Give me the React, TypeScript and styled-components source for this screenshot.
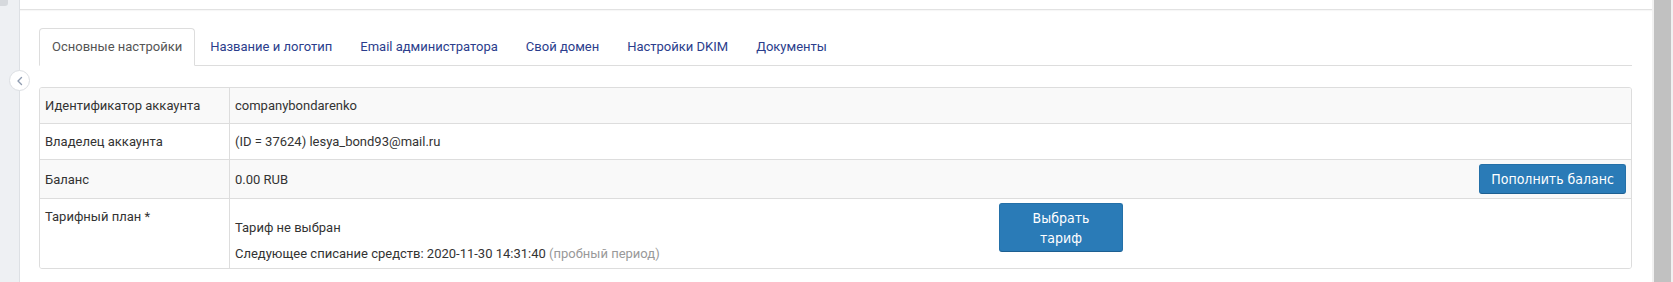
import React from "react";
import styled, { createGlobalStyle } from "styled-components";

const Global = createGlobalStyle`
  html, body { margin: 0; padding: 0; background: #fff; }
  body { font-family: Roboto, "Noto Sans", sans-serif; font-size: 13px; color: #333; }
  * { box-sizing: border-box; }
`;

const Page = styled.div`
  display: flex;
  width: 1673px;
  height: 282px;
  overflow: hidden;
  position: relative;
`;

const SideStrip = styled.div`
  width: 20px;
  flex: none;
  background: #eef0f3;
  border-right: 1px solid #dde0e4;
  position: relative;
`;

const SideTop = styled.div`
  width: 8px;
  height: 6px;
  background: #d6d9dd;
  border-bottom-right-radius: 3px;
`;

const CollapseBtn = styled.div`
  position: absolute;
  left: 9px;
  top: 70px;
  width: 21px;
  height: 21px;
  border-radius: 50%;
  background: #fff;
  border: 1px solid #dcdfe3;
  display: flex;
  align-items: center;
  justify-content: center;
  z-index: 2;
`;

const Main = styled.div`
  flex: 1;
  display: flex;
  flex-direction: column;
  background: #fff;
`;

const HeaderBar = styled.div`
  height: 10px;
  border-bottom: 1px solid #e2e2e2;
  box-shadow: 0 1px 1px rgba(0, 0, 0, 0.03);
`;

const Content = styled.div`
  padding: 18px 20px 0 19px;
`;

const Tabs = styled.ul`
  list-style: none;
  margin: 0;
  padding: 0;
  display: flex;
  border-bottom: 1px solid #ddd;
`;

const Tab = styled.li<{ $active?: boolean }>`
  margin: 0 2px -1px 0;
  padding: 9px 12px;
  line-height: 18px;
  font-size: 13px;
  border: 1px solid ${(p) => (p.$active ? "#ddd" : "transparent")};
  border-bottom-color: ${(p) => (p.$active ? "#fff" : "transparent")};
  border-radius: 4px 4px 0 0;
  background: ${(p) => (p.$active ? "#fff" : "transparent")};
  color: ${(p) => (p.$active ? "#555" : "#2b3d8c")};
  white-space: nowrap;
`;

const Table = styled.div`
  margin-top: 21px;
  border: 1px solid #ddd;
  border-radius: 3px;
  overflow: hidden;
`;

const Row = styled.div<{ $striped?: boolean }>`
  display: grid;
  grid-template-columns: 189px 1fr;
  background: ${(p) => (p.$striped ? "#f9f9f9" : "#fff")};
  & + & {
    border-top: 1px solid #ddd;
  }
`;

const Cell = styled.div<{ $tight?: boolean }>`
  padding: ${(p) => (p.$tight ? "4px 5px 4px 5px" : "8px 5px")};
  line-height: 19px;
  & + & {
    border-left: 1px solid #ddd;
  }
`;

const LabelCell = styled(Cell)`
  display: flex;
  align-items: center;
`;

const ActionCell = styled(Cell)`
  display: flex;
  align-items: center;
  justify-content: space-between;
`;

const PlanCell = styled(Cell)`
  display: flex;
  align-items: flex-start;
`;

const PlanText = styled.div`
  width: 764px;
  padding-top: 15px;
  display: flex;
  flex-direction: column;
  gap: 6px;
  line-height: 20px;
`;

const Muted = styled.span`
  color: #999;
`;

const Button = styled.button<{ $width?: number }>`
  font-family: "Liberation Sans Narrow", "DejaVu Sans Condensed", sans-serif;
  font-size: 14px;
  color: #fff;
  background: #2a7bb7;
  border: 1px solid #2470a8;
  border-bottom-color: #1d5f91;
  border-radius: 3px;
  cursor: pointer;
  line-height: 20px;
  ${(p) => (p.$width ? `width: ${p.$width}px;` : "")}
`;

const BalanceButton = styled(Button)`
  height: 30px;
  padding: 0 11px;
`;

const PlanButton = styled(Button)`
  height: 49px;
  padding: 3px 28px;
`;

const ScrollTrack = styled.div`
  width: 21px;
  flex: none;
  background: #f1f1f1;
  padding: 0 2px 0 2px;
  display: flex;
`;

const ScrollThumb = styled.div`
  flex: 1;
  background: #c1c1c1;
`;

export default function App() {
  return (
    <Page>
      <Global />
      <SideStrip>
        <SideTop />
        <CollapseBtn>
          <svg width="10" height="10" viewBox="0 0 10 10">
            <path d="M6.5 1.5 L3 5 L6.5 8.5" fill="none" stroke="#8e9bb0" strokeWidth="1.4" strokeLinecap="round" strokeLinejoin="round" />
          </svg>
        </CollapseBtn>
      </SideStrip>
      <Main>
        <HeaderBar />
        <Content>
          <Tabs>
            <Tab $active>Основные настройки</Tab>
            <Tab>Название и логотип</Tab>
            <Tab>Email администратора</Tab>
            <Tab>Свой домен</Tab>
            <Tab>Настройки DKIM</Tab>
            <Tab>Документы</Tab>
          </Tabs>
          <Table>
            <Row $striped>
              <Cell>Идентификатор аккаунта</Cell>
              <Cell>companybondarenko</Cell>
            </Row>
            <Row>
              <Cell>Владелец аккаунта</Cell>
              <Cell>(ID = 37624) lesya_bond93@mail.ru</Cell>
            </Row>
            <Row $striped>
              <LabelCell $tight>Баланс</LabelCell>
              <ActionCell $tight>
                <span>0.00 RUB</span>
                <BalanceButton>Пополнить баланс</BalanceButton>
              </ActionCell>
            </Row>
            <Row>
              <Cell>Тарифный план *</Cell>
              <PlanCell $tight>
                <PlanText>
                  <span>Тариф не выбран</span>
                  <span>
                    Следующее списание средств: 2020-11-30 14:31:40 <Muted>(пробный период)</Muted>
                  </span>
                </PlanText>
                <PlanButton $width={124}>Выбрать тариф</PlanButton>
              </PlanCell>
            </Row>
          </Table>
        </Content>
      </Main>
      <ScrollTrack>
        <ScrollThumb />
      </ScrollTrack>
    </Page>
  );
}
